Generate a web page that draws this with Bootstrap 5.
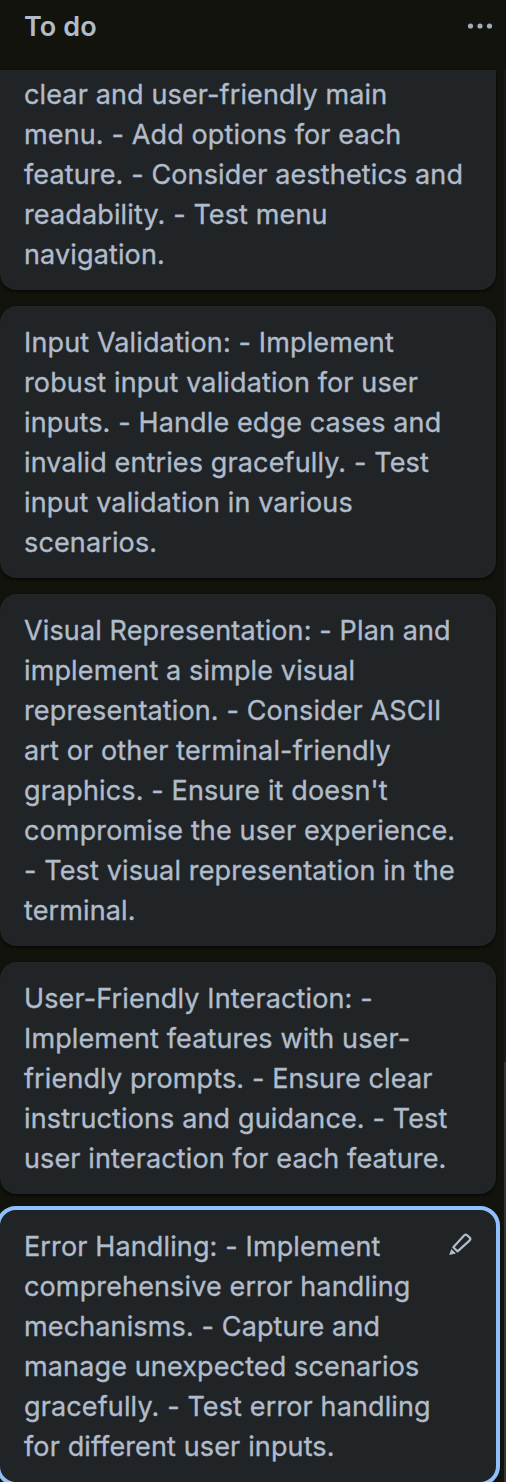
<!DOCTYPE html>
<html lang="en" data-bs-theme="dark">
<head>
<meta charset="utf-8">
<meta name="viewport" content="width=device-width, initial-scale=1">
<title>To do</title>
<link rel="stylesheet" href="https://cdn.jsdelivr.net/npm/bootstrap@5.3.0/dist/css/bootstrap.min.css">
<style>
  body { background: #12130c; color: #b0bccb; font-family: Inter, "Liberation Sans", sans-serif; }
  .board-list { height: 1482px; }
  .list-header { height: 70px; padding: 7px 13px 0 24px; }
  .list-title { font-size: 27px; line-height: 40px; font-weight: 600; letter-spacing: .1px; color: #b0bccb; }
  .list-menu { color: #9fadbc; margin-top: 7px; }
  .list-scroll { width: 504px; gap: 16px; }
  .task { width: 496px; padding: 17px 24px 15px; border: 0; border-radius: 16px; background: #212426; color: inherit;
    box-shadow: 0 2px 2px rgba(3,4,4,.5), 0 0 2px rgba(3,4,4,.5); }
  .task-cut { border-radius: 0 0 16px 16px; padding-top: 5px; }
  .task-focus { outline: 4px solid #8fc0fb; }
  .task p { font-size: 27px; line-height: 40px; letter-spacing: .13px; white-space: nowrap; -webkit-text-stroke: .35px currentColor; }
  .edit-icon { top: 20px; right: 22px; }
  .list-track { width: 2px; background: #181a15; }
  .list-thumb { height: 420px; background: #303334; }
</style>
</head>
<body>
<main class="board-list d-flex flex-column overflow-hidden">
  <header class="list-header d-flex justify-content-between align-items-start">
    <h2 class="list-title m-0">To do</h2>
    <svg class="list-menu" width="26" height="24" viewBox="0 0 26 24" fill="currentColor"><circle cx="3.5" cy="12" r="2.6"/><circle cx="13" cy="12" r="2.6"/><circle cx="22.5" cy="12" r="2.6"/></svg>
  </header>
  <div class="d-flex flex-grow-1">
    <div class="list-scroll d-flex flex-column flex-shrink-0">
      <article class="card task task-cut"><p class="m-0">clear and user-friendly main<br>menu. - Add options for each<br>feature. - Consider aesthetics and<br>readability. - Test menu<br>navigation.</p></article>
      <article class="card task"><p class="m-0">Input Validation: - Implement<br>robust input validation for user<br>inputs. - Handle edge cases and<br>invalid entries gracefully. - Test<br>input validation in various<br>scenarios.</p></article>
      <article class="card task"><p class="m-0">Visual Representation: - Plan and<br>implement a simple visual<br>representation. - Consider ASCII<br>art or other terminal-friendly<br>graphics. - Ensure it doesn't<br>compromise the user experience.<br>- Test visual representation in the<br>terminal.</p></article>
      <article class="card task"><p class="m-0">User-Friendly Interaction: -<br>Implement features with user-<br>friendly prompts. - Ensure clear<br>instructions and guidance. - Test<br>user interaction for each feature.</p></article>
      <article class="card task task-focus position-relative"><p class="m-0">Error Handling: - Implement<br>comprehensive error handling<br>mechanisms. - Capture and<br>manage unexpected scenarios<br>gracefully. - Test error handling<br>for different user inputs.</p>
        <svg class="edit-icon position-absolute" width="26" height="26" viewBox="0 0 26 26" fill="none" stroke="#b0bccb" stroke-width="2.2" stroke-linejoin="round"><path d="M5.3 17.2 16.3 5.3Q17.7 3.9 19.1 5.2L21.7 7.6Q23 9 21.7 10.4L9.6 21.4Z"/><path d="M3.3 19 8 23.4 1.2 25Z" fill="#b0bccb" stroke="none"/></svg>
      </article>
    </div>
    <div class="list-track d-flex flex-column justify-content-end"><div class="list-thumb"></div></div>
  </div>
</main>
<script src="https://cdn.jsdelivr.net/npm/bootstrap@5.3.0/dist/js/bootstrap.bundle.min.js"></script>
</body>
</html>
